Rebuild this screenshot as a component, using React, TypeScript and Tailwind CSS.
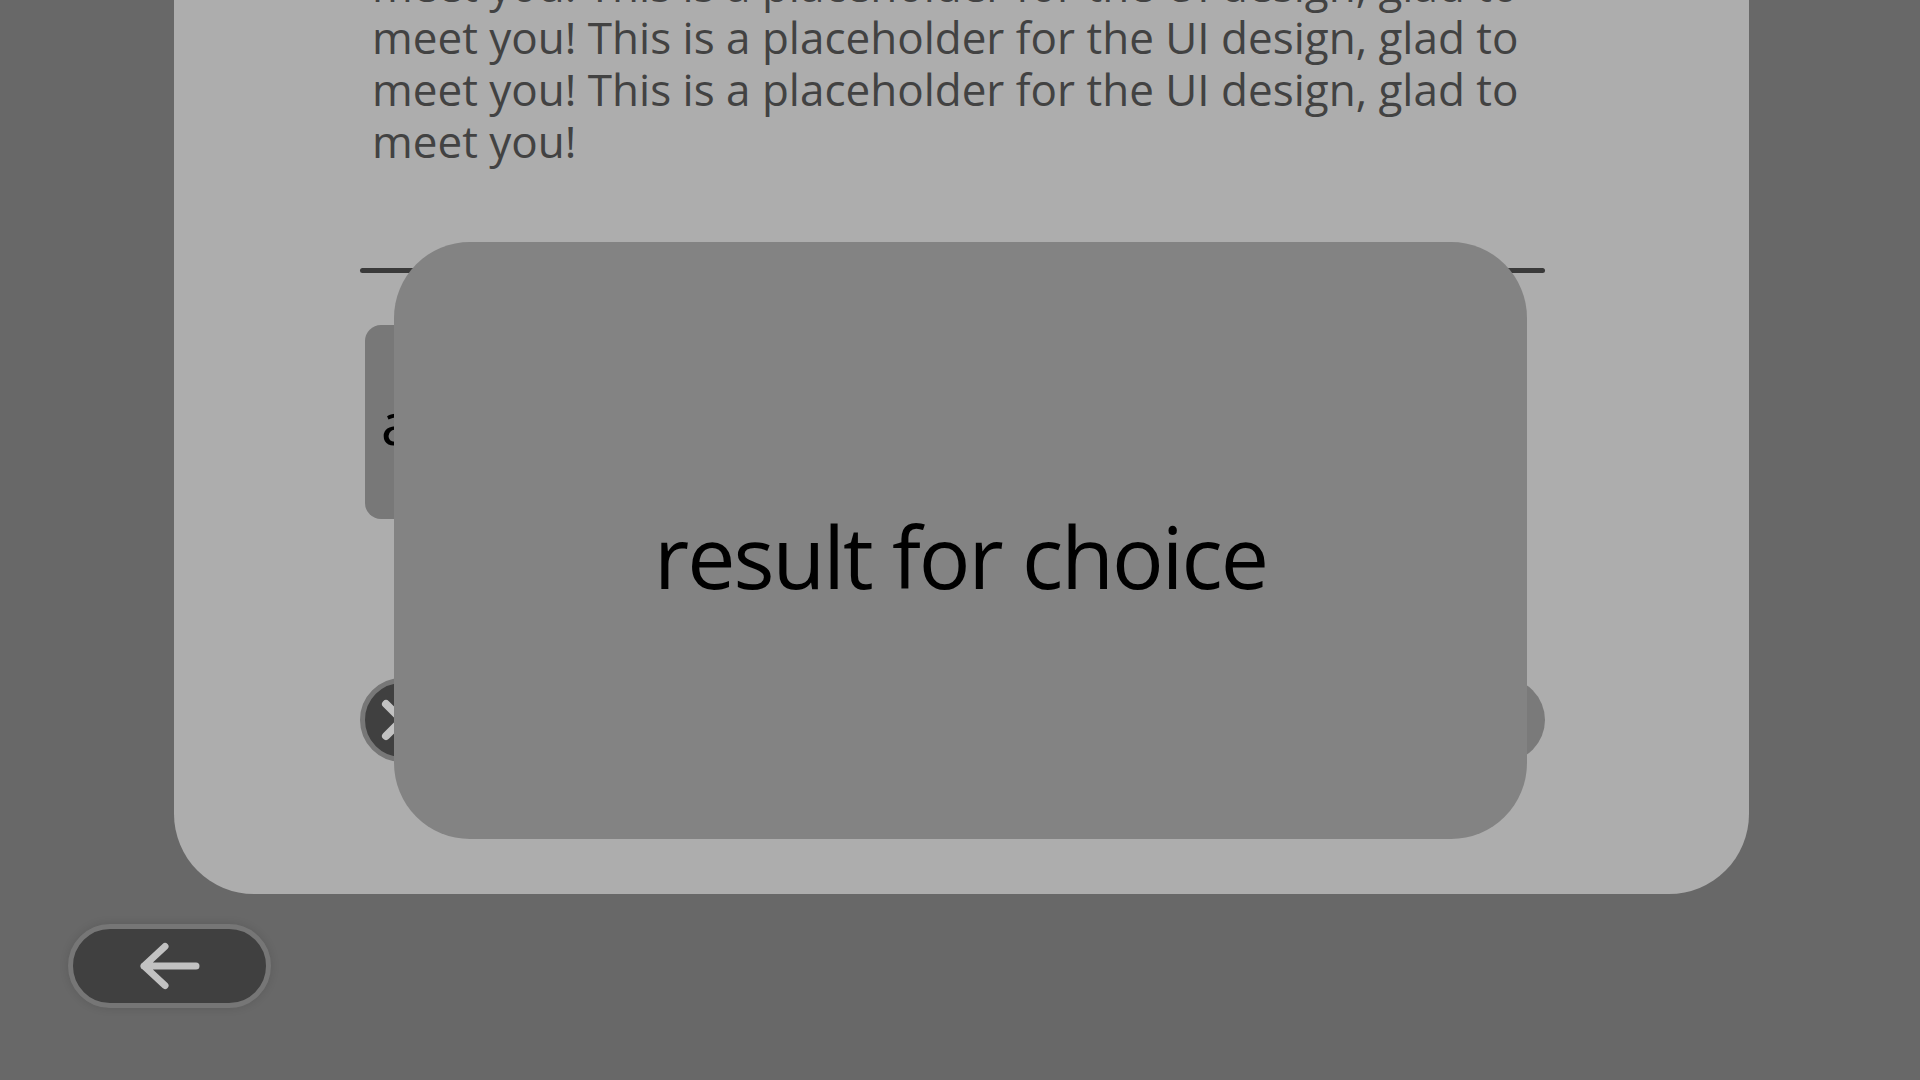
import React from "react";

const SENTENCE = "This is a placeholder for the UI design, glad to meet you!";

function BackArrow() {
  return (
    <svg width="64" height="52" viewBox="0 0 64 52" fill="none">
      <path
        d="M58 26 H6 M27 6.5 L6 26 L27 45.5"
        stroke="#c2c2c2"
        strokeWidth="7"
        strokeLinecap="round"
        strokeLinejoin="round"
      />
    </svg>
  );
}

function CloseGlyph() {
  return (
    <svg width="44" height="44" viewBox="0 0 44 44" fill="none">
      <path
        d="M6 6 L38 38 M38 6 L6 38"
        stroke="#c2c2c2"
        strokeWidth="8"
        strokeLinecap="round"
      />
    </svg>
  );
}

export default function App() {
  const para = "Hello! " + Array(8).fill(SENTENCE).join(" ");
  return (
    <div className="relative w-[1920px] h-[1080px] overflow-hidden bg-[#686868] font-['Open_Sans',sans-serif]">
      {/* card */}
      <div className="ml-[174px] w-[1575px] h-[894px] bg-[#adadad] rounded-b-[80px] overflow-hidden flex flex-col justify-end pb-[132px]">
        <div className="ml-[186px] w-[1185px] flex flex-col">
          <p className="pl-[12px] text-[44px] leading-[52px] text-[#424242]">
            {para}
          </p>
          <div className="mt-[101px] h-[5px] rounded-full bg-[#3a3a3a]" />
          <div className="mt-[52px] ml-[5px] h-[194px] w-[1100px] rounded-[16px] bg-[#787878] flex items-center pl-[16px] text-[58px] text-black">
            a
          </div>
          <div className="mt-[159px] flex justify-between items-center">
            <div className="w-[84px] h-[84px] rounded-full bg-[#404040] border-[5px] border-[#777777] flex items-center justify-center">
              <CloseGlyph />
            </div>
            <div className="w-[84px] h-[84px] rounded-full bg-[#7a7a7a]" />
          </div>
        </div>
      </div>

      {/* back button */}
      <button className="ml-[68px] mt-[30px] w-[203px] h-[84px] rounded-full bg-[#404040] border-[5px] border-[#767676] shadow-[0_0_10px_rgba(0,0,0,0.12)] flex items-center justify-center">
        <BackArrow />
      </button>

      {/* result modal */}
      <div className="absolute left-[394px] top-[242px] w-[1133px] h-[597px] rounded-[76px] bg-[#838383] flex items-center justify-center pt-[29px]">
        <span className="text-[86px] tracking-[-2px] text-black">result for choice</span>
      </div>
    </div>
  );
}
